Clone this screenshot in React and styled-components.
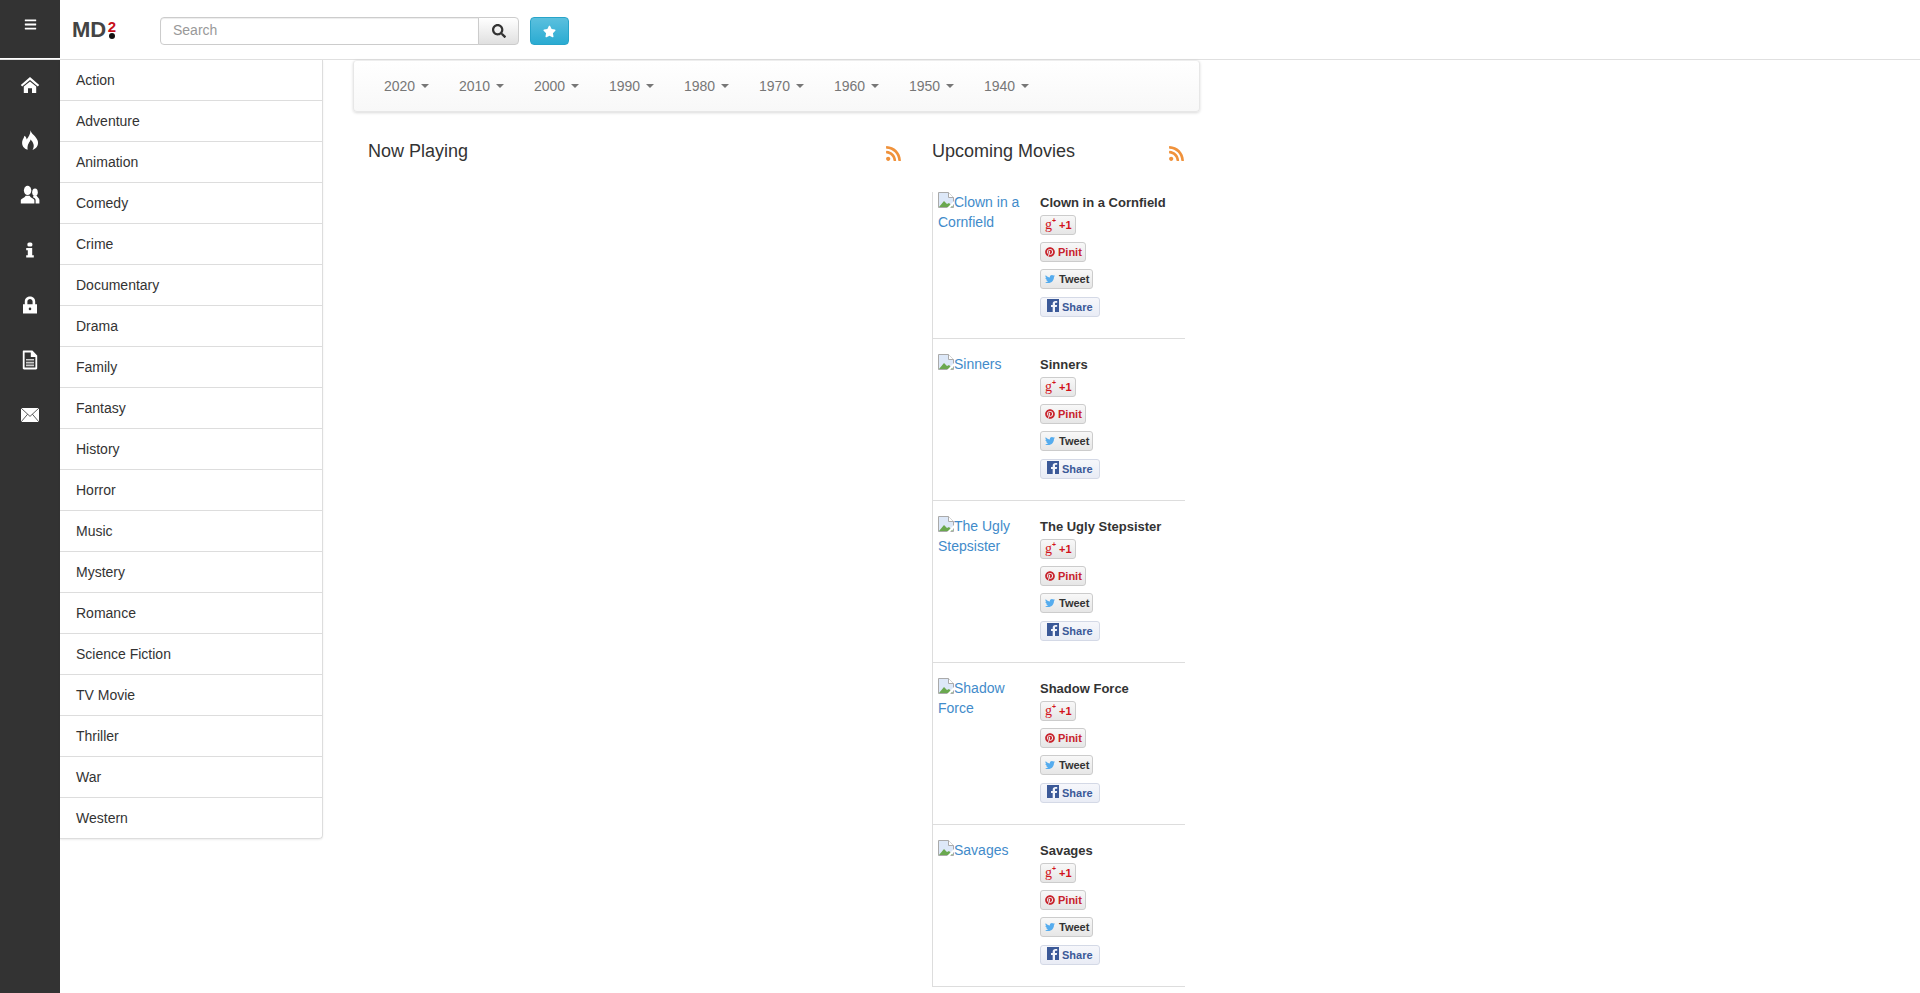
import React from "react";
import styled, { createGlobalStyle } from "styled-components";
import { FaSearch, FaStar, FaRss, FaPinterest, FaTwitter, FaBars } from "react-icons/fa";

const Global = createGlobalStyle`
  html, body { margin: 0; padding: 0; background: #fff; height: 993px; overflow: hidden; }
  body { font-family: "Liberation Sans", Arial, sans-serif; font-size: 14px; line-height: 20px; color: #333; }
  * { box-sizing: border-box; }
`;

const Page = styled.div`display: flex; flex-direction: column; height: 993px; overflow: hidden;`;
const TopBar = styled.header`display: flex; align-items: flex-start; height: 60px; border-bottom: 1px solid #e0e0e0; flex: none;`;
const MenuCell = styled.div`width: 60px; height: 58px; background: #333; color: #fff; display: flex; align-items: center; justify-content: center; padding-bottom: 9px; font-size: 13px;`;
const Logo = styled.div`width: 100px; height: 59px; padding: 17px 0 0 12px; display: flex; align-items: flex-start; font-weight: 700; color: #444;`;
const LogoText = styled.span`font-size: 22px; line-height: 26px; letter-spacing: -.2px;`;
const LogoSup = styled.span`display: flex; flex-direction: column; align-items: center; margin: 4px 0 0 2px; color: #c8101a; font-size: 15px; line-height: 11px;`;
const LogoDot = styled.i`width: 6px; height: 6px; border-radius: 50%; background: #111; margin-top: 1px;`;
const SearchInput = styled.input`width: 319px; height: 28px; margin-top: 17px; border: 1px solid #ccc; border-radius: 4px 0 0 4px; padding: 0 12px 2px; font: 14px/20px "Liberation Sans", Arial, sans-serif; box-shadow: inset 0 1px 1px rgba(0,0,0,.075); &::placeholder { color: #999; opacity: 1; }`;
const SearchButton = styled.button`width: 41px; height: 28px; margin: 17px 0 0 -1px; border: 1px solid #ccc; border-radius: 0 4px 4px 0; background: linear-gradient(#fff, #e0e0e0); color: #333; display: flex; align-items: center; justify-content: center; padding: 0; font-size: 14px;`;
const FavButton = styled.button`width: 39px; height: 28px; margin: 17px 0 0 11px; border: 1px solid #28a4c9; border-radius: 4px; background: linear-gradient(#5bc0de, #2aabd2); color: #fff; display: flex; align-items: center; justify-content: center; padding: 0; font-size: 13px;`;

const Body = styled.div`display: flex; flex: 1; min-height: 0;`;
const Rail = styled.nav`width: 60px; background: #333; color: #fff; flex: none; display: flex; flex-direction: column; align-items: center;`;
const RailIcon = styled.div`height: 55px; width: 100%; padding-bottom: 5px; display: flex; align-items: center; justify-content: center;`;
const Glyph = styled.svg`width: 20px; height: 20px; fill: #fff; display: block;`;
const Genres = styled.ul`list-style: none; margin: 0; padding: 0; width: 263px; height: 779px; flex: none; border: 1px solid #ddd; border-left: 0; border-top: 0; border-radius: 0 0 4px 0; box-shadow: 0 1px 2px rgba(0,0,0,.075);`;
const Genre = styled.li`height: 41px; padding: 10px 16px; border-bottom: 1px solid #ddd; color: #333; &:last-child { border-bottom: 0; }`;
const Content = styled.main`width: 847px; margin-left: 30px; flex: none;`;
const YearBar = styled.div`height: 52px; border: 1px solid #e7e7e7; border-top-color: #eee; border-radius: 4px; background: linear-gradient(#fff, #f8f8f8); box-shadow: 0 1px 3px rgba(0,0,0,.15); display: flex; padding-left: 15px;`;
const Year = styled.a`padding: 15px 15px; color: #777; display: flex; align-items: center; width: 75px; white-space: nowrap;`;
const Caret = styled.b`display: inline-block; margin-left: 6px; border-top: 4px solid #777; border-left: 4px solid transparent; border-right: 4px solid transparent; width: 0; height: 0;`;
const Columns = styled.div`display: flex;`;
const NowCol = styled.section`width: 549px; padding: 0 0 0 15px; flex: none;`;
const UpCol = styled.section`width: 253px; margin-left: 30px; flex: none;`;
const Heading = styled.div`display: flex; justify-content: space-between; align-items: center; height: 20px; margin-top: 29px; font-size: 18px; line-height: 20px;`;
const Rss = styled.span`color: #f0923b; font-size: 17px; line-height: 1; display: flex; margin-top: 4px;`;
const List = styled.div`margin-top: 31px; border-left: 1px solid #ddd;`;
const Movie = styled.article`height: 162px; display: flex; border-bottom: 1px solid #ddd; padding: 15px 0 0 5px; &:first-child { height: 147px; padding-top: 0; }`;
const PosterLink = styled.a`width: 102px; flex: none; color: #428bca; display: block; padding-right: 8px; line-height: 20px;`;
const Broken = styled.svg`width: 16px; height: 16px; vertical-align: -1px;`;
const Info = styled.div`display: flex; flex-direction: column; align-items: flex-start; padding-top: 2px; font-size: 13px;`;
const Title = styled.div`font-weight: 700; font-size: 13px; line-height: 18px; color: #333; margin-bottom: 3px;`;
const Social = styled.a`display: inline-flex; align-items: center; height: 20px; padding: 0 ${p => p.$right || 3}px 0 ${p => p.$pad || 4}px; margin-bottom: 7px; font-size: 11px; font-weight: 700; line-height: 18px; border: 1px solid ${p => p.$fb ? "#d4d9e6" : "#ccc"}; border-radius: 3px; color: ${p => p.$color}; background: ${p => p.$fb ? "linear-gradient(#f6f7fb,#e9ecf5)" : "linear-gradient(#f8f8f8,#e6e6e6)"}; gap: ${p => p.$gap || 3}px; svg { font-size: ${p => p.$size || 11}px; color: ${p => p.$icon || "inherit"}; } &:last-child { margin: 1px 0 0; }`;
const GPlus = styled.span`font: 400 14px/16px "Liberation Serif", serif; color: #d2121a; display: inline-flex; align-items: flex-start;`;
const GPlusMark = styled.span`font: 700 7px/8px "Liberation Sans", sans-serif;`;
const FbMark = styled.svg`width: 12px; height: 13px; margin-top: -3px;`;

const genres = ["Action","Adventure","Animation","Comedy","Crime","Documentary","Drama","Family","Fantasy","History","Horror","Music","Mystery","Romance","Science Fiction","TV Movie","Thriller","War","Western"];
const years = [2020,2010,2000,1990,1980,1970,1960,1950,1940];
const movies = ["Clown in a Cornfield","Sinners","The Ugly Stepsister","Shadow Force","Savages"];

const BrokenImage = () => (
  <Broken viewBox="0 0 16 16">
    <path d="M.5.5h10l5 5v10H.5z" fill="#dde8f8" stroke="#aaa" />
    <path d="M1 15l5-6 3 3 2-1 4 4z" fill="#6aa84f" />
    <path d="M10.5.5v5h5" fill="#fff" stroke="#aaa" />
    <path d="M16 9l-7 7h3l4-4z" fill="#fff" />
  </Broken>
);

const Home = () => (
  <Glyph viewBox="0 0 20 20">
    <path d="M10 2 19.2 10 17.8 11.6 10 4.9 2.2 11.6.8 10Z" />
    <path d="M3.8 11.6 10 6.4 16.2 11.6V18H12V13.2H8V18H3.8Z" />
  </Glyph>
);
const Fire = () => (
  <Glyph viewBox="0 0 20 20">
    <path d="M10.500.3C11 4 16.200 6 17.800 11 19 15.800 15.500 19 12.500 19.800 15 16.500 13.500 12.500 10.600 9.600 10 12.200 7 14 7.600 19.800 4.200 18.800 1.500 15.800 2.200 11.500 2.800 9 4 8 4.400 5.800 6 6.800 6.600 8.400 6.600 9.600 8.600 7 10.500 4 10.500.3Z" />
  </Glyph>
);
const Group = () => (
  <Glyph viewBox="0 0 20 20">
    <ellipse cx="7.6" cy="5.4" rx="3.7" ry="4.6" />
    <path d="M.8 18.600V15.600C.8 13.400 4.600 13.200 5.600 10.800H9.600C10.600 13.200 14.400 13.400 14.400 15.600V18.600Z" />
    <ellipse cx="15" cy="7.2" rx="2.8" ry="3.8" />
    <path d="M15.600 18.600V15C15.600 13.600 14 12.800 13 12.200L13.400 10.800H16.800C17.200 12.600 19.400 12.900 19.400 15V18.600Z" />
  </Glyph>
);
const Info2 = () => (
  <Glyph viewBox="0 0 20 20">
    <rect x="7.4" y="2.4" width="5" height="4.2" rx="1.6" />
    <path d="M6.200 8H12.200V15.200H13.800V17.600H6.200V15.200H7.800V10.200H6.200Z" />
  </Glyph>
);
const Lock = () => (
  <Glyph viewBox="0 0 20 20">
    <path fillRule="evenodd" d="M3 9.200H4.800V6.600C4.800-.2 15.200-.2 15.200 6.600V9.200H17V18.600H3ZM7.400 9.200H12.600V6.600C12.600 3.200 7.400 3.200 7.400 6.600ZM10 12.600A1.300 1.300 0 1 0 10 15.200 1.300 1.300 0 1 0 10 12.600Z" />
  </Glyph>
);
const FileIcon = () => (
  <Glyph viewBox="0 0 20 20">
    <path fillRule="evenodd" d="M3.400.6H12.400L17.200 5.400V18.200C17.200 18.900 16.700 19.400 16 19.400H4C3.300 19.400 2.800 18.900 2.800 18.200V1.200C2.800.9 3.100.6 3.400.6ZM4.600 2.400V17.600H15.400V7H10.800V2.400Z" />
    <path d="M6 9H14V10.600H6ZM6 11.800H14V13.400H6ZM6 14.600H14V16.200H6Z" opacity=".75" />
    <path d="M12.200 2.600V5.400H15Z" />
  </Glyph>
);
const Mail = () => (
  <Glyph viewBox="0 0 20 20">
    <rect x="1" y="3" width="18" height="14" />
    <path d="M1 3 10 11.400 19 3M1 17 7.600 9.200M19 17 12.400 9.200" fill="none" stroke="#333" strokeWidth=".8" />
  </Glyph>
);

export default function App() {
  return (
    <Page>
      <Global />
      <TopBar>
        <MenuCell><FaBars /></MenuCell>
        <Logo>
          <LogoText>MD</LogoText>
          <LogoSup>2<LogoDot /></LogoSup>
        </Logo>
        <SearchInput placeholder="Search" />
        <SearchButton><FaSearch /></SearchButton>
        <FavButton><FaStar /></FavButton>
      </TopBar>
      <Body>
        <Rail>
          <RailIcon><Home /></RailIcon>
          <RailIcon><Fire /></RailIcon>
          <RailIcon><Group /></RailIcon>
          <RailIcon><Info2 /></RailIcon>
          <RailIcon><Lock /></RailIcon>
          <RailIcon><FileIcon /></RailIcon>
          <RailIcon><Mail /></RailIcon>
        </Rail>
        <Genres>{genres.map(g => <Genre key={g}>{g}</Genre>)}</Genres>
        <Content>
          <YearBar>{years.map(y => <Year key={y}>{y}<Caret /></Year>)}</YearBar>
          <Columns>
            <NowCol>
              <Heading>Now Playing<Rss><FaRss /></Rss></Heading>
            </NowCol>
            <UpCol>
              <Heading>Upcoming Movies<Rss><FaRss /></Rss></Heading>
              <List>
                {movies.map(m => (
                  <Movie key={m}>
                    <PosterLink><BrokenImage />{m}</PosterLink>
                    <Info>
                      <Title>{m}</Title>
                      <Social $color="#d2121a" $gap={3}><GPlus>g<GPlusMark>+</GPlusMark></GPlus>+1</Social>
                      <Social $color="#c8232c" $size={10}><FaPinterest />Pinit</Social>
                      <Social $color="#333" $icon="#55acee" $size={10} $gap={4}><FaTwitter />Tweet</Social>
                      <Social $fb $color="#3b5998" $pad={6} $right={6}>
                        <FbMark viewBox="0 0 12 13">
                          <rect width="12" height="13" fill="#3b5998" />
                          <path d="M8 13V8h1.800l.3-2H8V4.800c0-.6.2-1 1-1h1.200V2C10 2 9.300 1.900 8.500 1.900 6.800 1.900 5.700 2.900 5.700 4.700V6H4v2h1.700v5Z" fill="#f2f4fa" />
                        </FbMark>
                        Share
                      </Social>
                    </Info>
                  </Movie>
                ))}
              </List>
            </UpCol>
          </Columns>
        </Content>
      </Body>
    </Page>
  );
}
